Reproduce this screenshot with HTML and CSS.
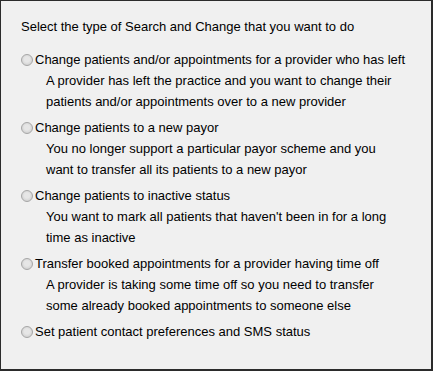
FILE: index.html
```html
<!DOCTYPE html>
<html>
<head>
<meta charset="utf-8">
<link rel="stylesheet" href="styles.css">
</head>
<body>
<div class="panel">
  <div class="heading">Select the type of Search and Change that you want to do</div>
  <div class="options">
    <div class="option">
      <label class="choice"><span class="radio"></span>Change patients and/or appointments for a provider who has left</label>
      <div class="desc">A provider has left the practice and you want to change their<br>patients and/or appointments over to a new provider</div>
    </div>
    <div class="option">
      <label class="choice"><span class="radio"></span>Change patients to a new payor</label>
      <div class="desc">You no longer support a particular payor scheme and you<br>want to transfer all its patients to a new payor</div>
    </div>
    <div class="option">
      <label class="choice"><span class="radio"></span>Change patients to inactive status</label>
      <div class="desc">You want to mark all patients that haven't been in for a long<br>time as inactive</div>
    </div>
    <div class="option">
      <label class="choice"><span class="radio"></span>Transfer booked appointments for a provider having time off</label>
      <div class="desc">A provider is taking some time off so you need to transfer<br>some already booked appointments to someone else</div>
    </div>
    <div class="option">
      <label class="choice"><span class="radio"></span>Set patient contact preferences and SMS status</label>
    </div>
  </div>
</div>
</body>
</html>
```

FILE: styles.css
```css
html, body {
  margin: 0;
  padding: 0;
}
body {
  font-family: "Liberation Sans", Arial, sans-serif;
  font-size: 13px;
  color: #000;
  background: #f0f0f0;
}
.panel {
  box-sizing: border-box;
  width: 433px;
  height: 371px;
  background: #f0f0f0;
  border-style: solid;
  border-color: #2b2b2b;
  border-width: 1px 2px 2px 1px;
  padding: 15px 0 0 20px;
  line-height: 21px;
}
.heading {
  margin-bottom: 12px;
}
.options {
  display: flex;
  flex-direction: column;
  gap: 5px;
}
.choice {
  display: flex;
  align-items: center;
  white-space: nowrap;
}
.radio {
  box-sizing: border-box;
  width: 12px;
  height: 12px;
  margin: 1px 2px 0 0;
  border-radius: 50%;
  border: 1px solid #a6a6a6;
  background: radial-gradient(circle at 50% 45%, #e6e6e6 0, #e6e6e6 35%, #d4d4d4 70%, #f4f4f4 100%);
  flex: none;
}
.desc {
  padding-left: 25px;
  white-space: nowrap;
}
```
